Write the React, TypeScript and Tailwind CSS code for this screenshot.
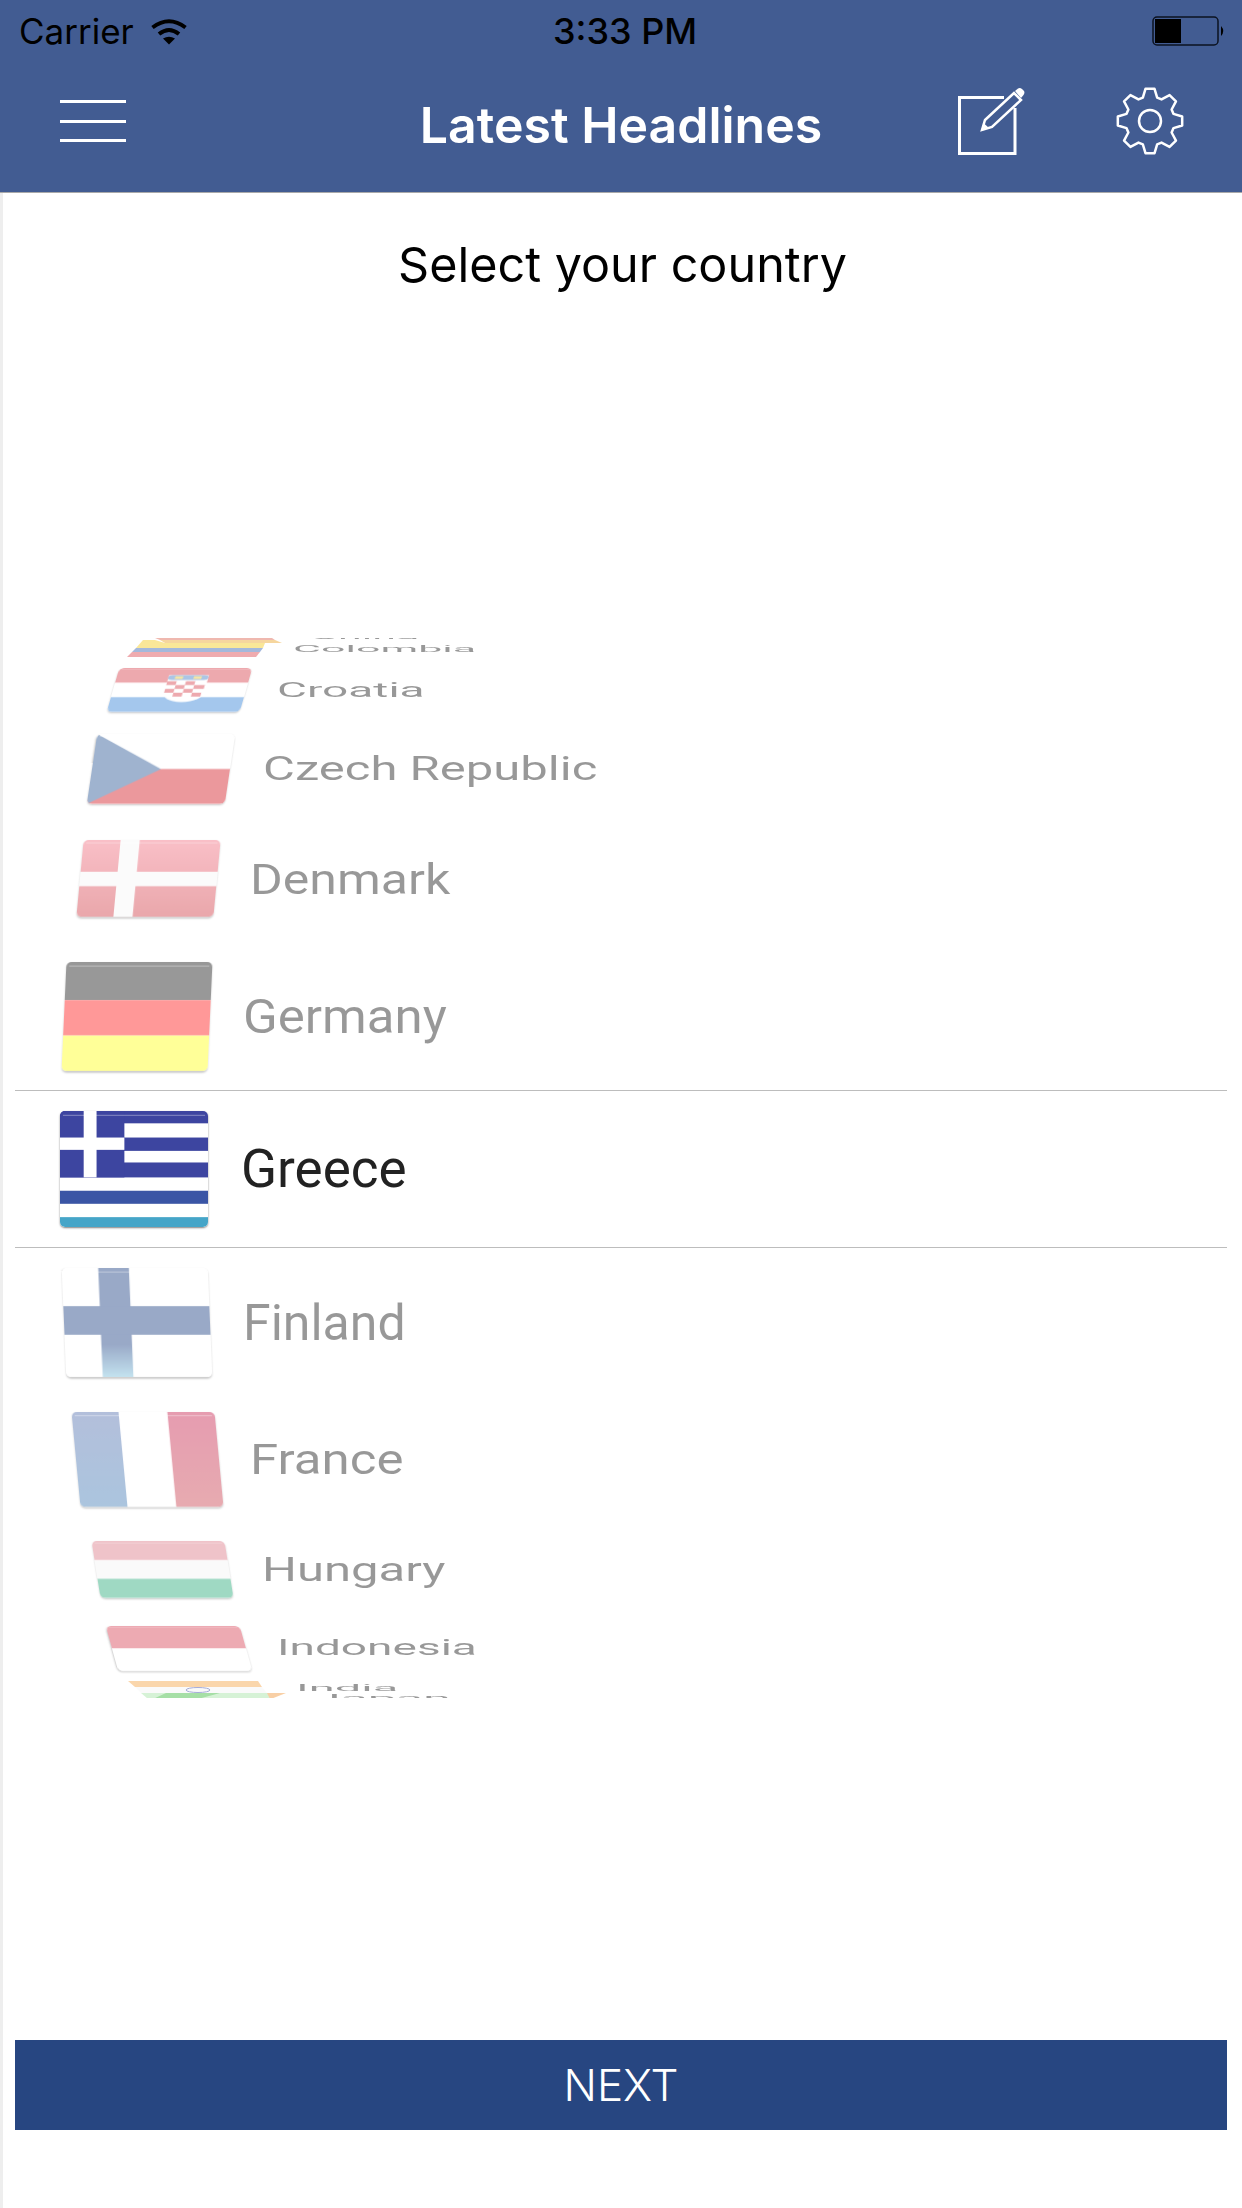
import React from 'react';

const gearPath = (() => {
  const cx = 36;
  const cy = 36;
  const pt = (deg: number, r: number) => {
    const a = ((deg - 90) * Math.PI) / 180;
    return `${(cx + r * Math.cos(a)).toFixed(2)} ${(cy + r * Math.sin(a)).toFixed(2)}`;
  };
  let d = '';
  for (let i = 0; i < 8; i++) {
    const c = i * 45;
    d += `${i === 0 ? 'M' : 'L'}${pt(c - 17, 24.5)} L${pt(c - 8, 32.5)} L${pt(c + 8, 32.5)} L${pt(c + 17, 24.5)} `;
  }
  return d + 'Z';
})();

const Wifi = () => (
  <svg width="38" height="27" viewBox="0 0 38 27" className="ml-[16px]">
    <path d="M2.5 9.5 Q19 -3 35.5 9.5" fill="none" stroke="#000" strokeWidth="4" />
    <path d="M9 16 Q19 8 29 16" fill="none" stroke="#000" strokeWidth="4" />
    <path d="M13 20.5 Q19 17 25 20.5 L19 26.5 Z" fill="#000" />
  </svg>
);

const Battery = () => (
  <svg width="74" height="30" viewBox="0 0 74 30">
    <rect x="1" y="1" width="65" height="28" rx="4" fill="none" stroke="#0b1220" strokeWidth="1.5" />
    <rect x="3" y="3" width="26" height="24" fill="#000" />
    <path d="M69 10 Q73.5 15 69 20 Z" fill="#000" />
  </svg>
);

const Hamburger = () => (
  <svg width="66" height="44" viewBox="0 0 66 44">
    <rect y="1" width="66" height="3" fill="#fff" />
    <rect y="21" width="66" height="3" fill="#fff" />
    <rect y="40" width="66" height="3" fill="#fff" />
  </svg>
);

const ComposeIcon = () => (
  <svg width="68" height="68" viewBox="0 0 68 68">
    <path d="M46 10.5 H1.5 V66.5 H57 V21" fill="none" stroke="#fff" strokeWidth="3" />
    <path d="M24 43 L27 33 L56 6 L63 13 L34 40 Z" fill="none" stroke="#fff" strokeWidth="2.5" />
    <path d="M23 44 L25.5 36 L31 41 Z" fill="#fff" />
    <path d="M57 4 L60 1.5 Q62 0.5 64 2 L66 4 Q67 6 65.5 8 L63 11 Z" fill="#fff" />
  </svg>
);

const GearIcon = () => (
  <svg width="72" height="72" viewBox="0 0 72 72">
    <path d={gearPath} fill="none" stroke="#fff" strokeWidth="2.5" strokeLinejoin="round" />
    <circle cx="36" cy="36" r="11" fill="none" stroke="#fff" strokeWidth="2.5" />
  </svg>
);

const flagArt: Record<string, React.ReactNode> = {
  Croatia: (
    <>
      <rect width="100" height="27" fill="#d42a37" />
      <rect y="27" width="100" height="26" fill="#fff" />
      <rect y="53" width="100" height="27" fill="#1e75d4" />
      <path d="M39 13 H69 V44 Q69 60 54 62 Q39 60 39 44 Z" fill="#fff" />
      <path d="M39 24 H46 V31 H39 Z M53 24 H60 V31 H53 Z M46 31 H53 V38 H46 Z M60 31 H68 V38 H60 Z M39 38 H46 V45 H39 Z M53 38 H60 V45 H53 Z M46 45 H53 V52 H46 Z M60 45 H67 V52 H60 Z" fill="#d42a37" />
      <rect x="39" y="13" width="30" height="9" rx="3" fill="#2f6fc0" />
      <rect x="44" y="15" width="6" height="5" fill="#e8c020" />
      <rect x="58" y="15" width="6" height="5" fill="#e8c020" />
    </>
  ),
  'Czech Republic': (
    <>
      <rect width="100" height="80" fill="#fff" />
      <rect y="40" width="100" height="40" fill="#cf000a" />
      <path d="M0 0 L50 40 L0 80 Z" fill="#114389" />
    </>
  ),
  Denmark: (
    <>
      <rect width="100" height="80" fill="url(#denmark-red)" />
      <rect x="27" width="14" height="80" fill="#f7f7f7" />
      <rect y="33" width="100" height="15" fill="#f7f7f7" />
    </>
  ),
  Germany: (
    <>
      <rect width="100" height="28" fill="#000" />
      <rect y="28" width="100" height="26" fill="#ff0000" />
      <rect y="54" width="100" height="26" fill="#ffff00" />
    </>
  ),
  Greece: (
    <>
      <rect width="100" height="80" fill="#fff" />
      <rect width="100" height="8.5" fill="#3d45a0" />
      <rect y="18.3" width="100" height="9.2" fill="#3d45a0" />
      <rect y="35.5" width="100" height="10.3" fill="#3d45a0" />
      <rect y="55" width="100" height="9" fill="#3a55a5" />
      <rect y="73.2" width="100" height="6.8" fill="#45a5c8" />
      <rect width="43.5" height="45.8" fill="#3d45a0" />
      <rect x="16" width="8.7" height="45.8" fill="#fff" />
      <rect y="18.3" width="43.5" height="8.5" fill="#fff" />
    </>
  ),
  Finland: (
    <>
      <rect width="100" height="80" fill="#fff" />
      <rect x="25" width="21" height="80" fill="url(#finland-blue)" />
      <rect y="28" width="100" height="21" fill="#022a75" />
    </>
  ),
  France: (
    <>
      <rect width="33" height="80" fill="url(#france-blue)" />
      <rect x="33" width="34" height="80" fill="#fff" />
      <rect x="67" width="33" height="80" fill="url(#france-red)" />
    </>
  ),
  Hungary: (
    <>
      <rect width="100" height="27" fill="#d96a7a" />
      <rect y="27" width="100" height="26" fill="#f4f4f4" />
      <rect y="53" width="100" height="27" fill="#11a16b" />
    </>
  ),
  Indonesia: (
    <>
      <rect width="100" height="40" fill="#d42c42" />
      <rect y="40" width="100" height="40" fill="#fff" />
    </>
  ),
};

const FlagDefs = () => (
  <svg width="0" height="0" className="absolute">
    <defs>
      <linearGradient id="denmark-red" x1="0" y1="0" x2="0" y2="1">
        <stop offset="0" stopColor="#f26175" />
        <stop offset="1" stopColor="#ca252f" />
      </linearGradient>
      <linearGradient id="finland-blue" x1="0" y1="0" x2="0" y2="1">
        <stop offset="0" stopColor="#022a75" />
        <stop offset="0.7" stopColor="#022a75" />
        <stop offset="1" stopColor="#6bb8d8" />
      </linearGradient>
      <linearGradient id="france-blue" x1="0" y1="0" x2="0" y2="1">
        <stop offset="0" stopColor="#4361a7" />
        <stop offset="1" stopColor="#2f6fae" />
      </linearGradient>
      <linearGradient id="france-red" x1="0" y1="0" x2="0" y2="1">
        <stop offset="0" stopColor="#c20a3c" />
        <stop offset="1" stopColor="#c42f3c" />
      </linearGradient>
    </defs>
  </svg>
);

const Flag = ({ name, className }: { name: string; className: string }) => (
  <div className={`shrink-0 overflow-hidden rounded-[5px] shadow-[0_1px_2px_rgba(0,0,0,0.5)] ${className}`}>
    <svg width="100%" height="100%" viewBox="0 0 100 80" preserveAspectRatio="none" className="block">
      {flagArt[name]}
      <path d="M2 3 H98" stroke="#fff" strokeOpacity="0.3" strokeWidth="1" />
    </svg>
  </div>
);

type Row = {
  name: string;
  rowClass: string;
  flagClass: string;
  labelClass: string;
};

const aboveRows: Row[] = [
  {
    name: 'Croatia',
    rowClass: 'mt-[10px] ml-[110px]',
    flagClass: 'w-[133px] h-[44px] skew-x-[-16deg] blur-[0.5px]',
    labelClass: 'ml-[31px] text-[46px] scale-y-[0.45] blur-[0.3px]',
  },
  {
    name: 'Czech Republic',
    rowClass: 'mt-[21px] ml-[89px]',
    flagClass: 'w-[138px] h-[70px] skew-x-[-8.5deg] blur-[0.5px]',
    labelClass: 'ml-[33px] text-[49px] scale-y-[0.66] blur-[0.3px]',
  },
  {
    name: 'Denmark',
    rowClass: 'mt-[36px] ml-[77px]',
    flagClass: 'w-[137px] h-[77px] skew-x-[-5.4deg] blur-[0.5px]',
    labelClass: 'ml-[33px] text-[50px] scale-y-[0.86]',
  },
  {
    name: 'Germany',
    rowClass: 'mt-[45px] ml-[61px]',
    flagClass: 'w-[146px] h-[109px] skew-x-[-2.6deg] blur-[0.4px]',
    labelClass: 'ml-[33px] text-[51px] scale-y-[0.94]',
  },
];

const belowRows: Row[] = [
  {
    name: 'Finland',
    rowClass: 'mt-[20px] ml-[61px]',
    flagClass: 'w-[146px] h-[109px] skew-x-[2.4deg] blur-[0.4px]',
    labelClass: 'ml-[33px] text-[50px]',
  },
  {
    name: 'France',
    rowClass: 'mt-[35px] ml-[73px]',
    flagClass: 'w-[143px] h-[95px] skew-x-[5.4deg] blur-[0.5px]',
    labelClass: 'ml-[31px] text-[51px] scale-y-[0.82]',
  },
  {
    name: 'Hungary',
    rowClass: 'mt-[34px] ml-[93px]',
    flagClass: 'w-[133px] h-[57px] skew-x-[9deg] blur-[0.5px]',
    labelClass: 'ml-[33px] text-[49px] scale-y-[0.69] blur-[0.3px]',
  },
  {
    name: 'Indonesia',
    rowClass: 'mt-[27px] ml-[109px]',
    flagClass: 'w-[134px] h-[45px] skew-x-[15.5deg] blur-[0.5px]',
    labelClass: 'ml-[31px] text-[46px] scale-y-[0.46] blur-[0.3px]',
  },
];

const CountryRow = ({ row }: { row: Row }) => (
  <div className={`flex items-center opacity-40 ${row.rowClass}`}>
    <Flag name={row.name} className={row.flagClass} />
    <span className={`origin-left leading-none whitespace-nowrap text-black ${row.labelClass}`}>{row.name}</span>
  </div>
);

const App = () => {
  return (
    <div className="w-[1242px] h-[2208px] bg-white overflow-hidden font-['Roboto',sans-serif]">
      <FlagDefs />
      <header className="h-[193px] bg-[#425c92] border-b border-[#a9a9a9] flex flex-col">
        <div className="h-[60px] pt-[2px] grid grid-cols-[1fr_auto_1fr] items-center text-black text-[35px] leading-none font-['Inter',sans-serif]">
          <div className="flex items-center pl-[19px]">
            <span>Carrier</span>
            <Wifi />
          </div>
          <span className="font-medium text-[36px] ml-[8px]">3:33 PM</span>
          <div className="flex justify-end pr-[16px]">
            <Battery />
          </div>
        </div>
        <div className="flex-1 grid grid-cols-[1fr_auto_1fr] items-center">
          <div className="pl-[60px] mb-[11px]">
            <Hamburger />
          </div>
          <h1 className="text-white text-[50px] font-semibold leading-none font-['Inter',sans-serif] mb-[2px]">Latest Headlines</h1>
          <div className="flex justify-end items-center gap-[88px] pr-[56px] mb-[11px]">
            <ComposeIcon />
            <GearIcon />
          </div>
        </div>
      </header>

      <main className="border-l-[3px] border-[#eeeeee] h-[2015px] flex flex-col">
        <div className="h-[445px] pt-[48px] text-center text-black text-[48.5px] leading-none font-['Inter',sans-serif]">Select your country</div>

        <div className="h-[1060px] overflow-hidden">
          <div className="flex items-start ml-[124px] opacity-40 blur-[0.4px]">
            <svg width="156" height="19" viewBox="0 0 156 19" className="shrink-0">
              <path d="M16 2 H28 L38 5 H138 L136 10 H9 Z" fill="#f5c400" />
              <path d="M28 0 H145 L148 2 H33 Z" fill="#d9503a" />
              <path d="M33 2 H148 L155 5 H38 Z" fill="#eb9a10" />
              <path d="M9 10 H136 L133 14 H5 Z" fill="#1f4fa8" />
              <path d="M5 14 H133 L129 19 H0 Z" fill="#d9303a" />
            </svg>
            <div className="ml-[10px] w-[200px] flex flex-col text-black whitespace-nowrap leading-none">
              <span className="h-[8px] -mt-[6px] ml-[17px] text-[43px] leading-[8px] scale-y-[0.2] origin-left">China</span>
              <span className="h-[8px] mt-[5px] text-[43px] leading-[8px] scale-y-[0.23] origin-left">Colombia</span>
            </div>
          </div>

          {aboveRows.map((row) => (
            <CountryRow key={row.name} row={row} />
          ))}

          <div className="mt-[19px] ml-[12px] mr-[15px] h-[158px] border-y-[1.5px] border-[#bdbdbd] flex items-center pl-[45px]">
            <Flag name="Greece" className="w-[148px] h-[116px] blur-[0.4px]" />
            <span className="ml-[33px] text-[53px] leading-none text-[#222222]">Greece</span>
          </div>

          {belowRows.map((row) => (
            <CountryRow key={row.name} row={row} />
          ))}

          <div className="mt-[10px] flex items-start ml-[125px] opacity-40 blur-[0.4px]">
            <svg width="158" height="18" viewBox="0 0 158 18" className="shrink-0">
              <path d="M110 12 H158 L143 18 H110 Z" fill="#f08a20" />
              <path d="M0 0 H130 L134 6 H7 Z" fill="#f59a30" />
              <path d="M7 6 H134 L139 12 H13 Z" fill="#f4f4f4" />
              <path d="M13 12 H139 L142 18 H20 Z" fill="#9be09b" />
              <path d="M25 18 L38 12 H92 L70 18 Z" fill="#22b022" />
              <ellipse cx="70" cy="9" rx="12" ry="2.5" fill="none" stroke="#2030a0" strokeWidth="1" />
            </svg>
            <div className="ml-[10px] w-[200px] flex flex-col text-black whitespace-nowrap leading-none">
              <span className="h-[8px] mt-[3px] text-[47px] leading-[8px] scale-y-[0.18] origin-left">India</span>
              <span className="h-[8px] mt-[2px] ml-[17px] text-[50px] leading-[8px] scale-y-[0.18] origin-left">Japan</span>
            </div>
          </div>
        </div>

        <button className="mt-[342px] ml-[12px] mr-[15px] h-[90px] bg-[#274681] text-white text-[44px] font-light leading-none font-['Inter',sans-serif]">
          NEXT
        </button>
      </main>
    </div>
  );
};

export default App;
